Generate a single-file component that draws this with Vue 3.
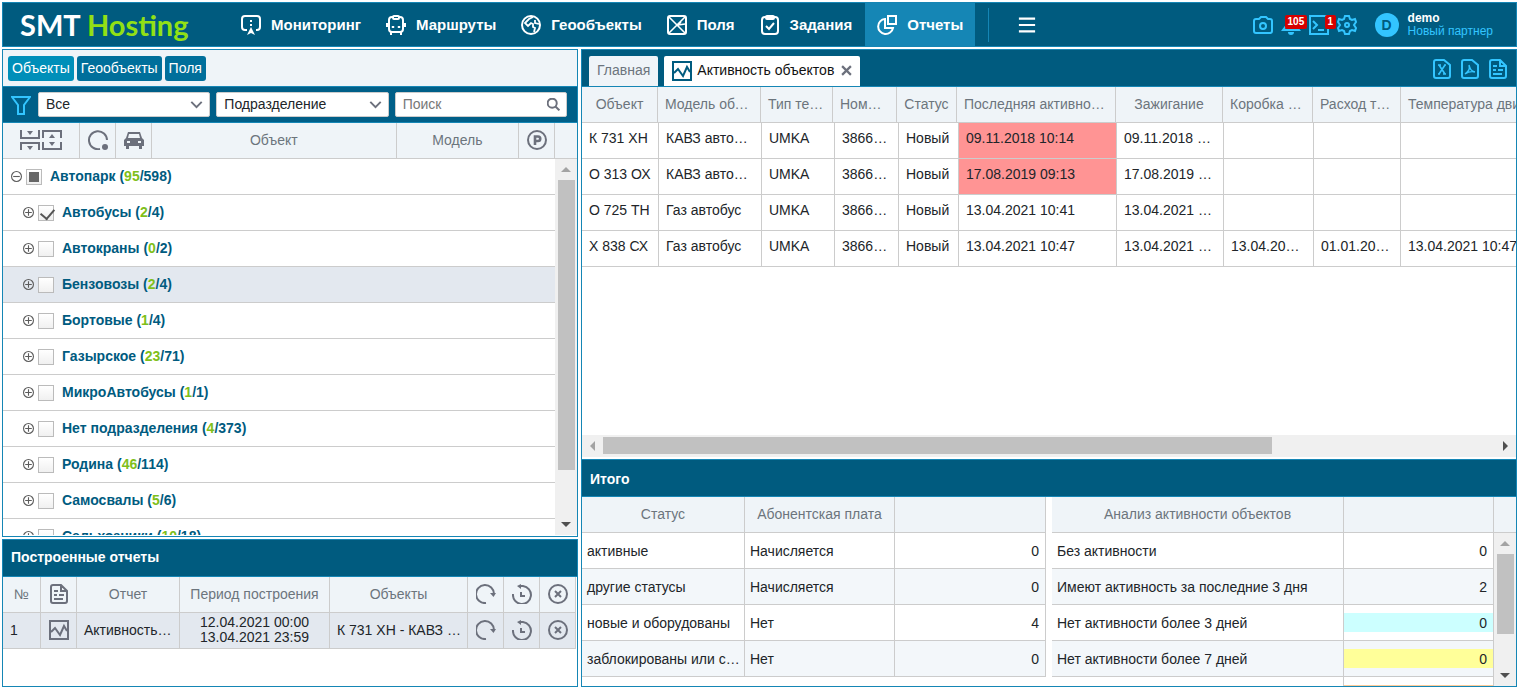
<script setup>
import { h, ref } from 'vue'

const shapes = {
  monitor: '<path d="M6 15H4a3 3 0 0 1-3-3V4a3 3 0 0 1 3-3h12a3 3 0 0 1 3 3v8a3 3 0 0 1-3 3h-1M10 5v2M10 9v2"/><path d="M10 12l4 8-4-2-4 2z" fill="currentColor" stroke="none"/>',
  bus: '<path d="M7 2H6a3 3 0 0 0-3 3v9a3 3 0 0 0 3 3h8a3 3 0 0 0 3-3V5a3 3 0 0 0-3-3h-1M1 8v4M19 8v4M5 17v3M15 17v3"/><rect x="7" y="1" width="6" height="3" rx="1"/><path d="M7 11v2M13 11v2" stroke-width="2.4"/>',
  globe: '<circle cx="10" cy="10" r="9"/><path d="M12 2L8 4 4 8l3 3 3-3 2 1v3l2 1-1 4M14 5v3l4 1" stroke-width="1.800"/>',
  field: '<rect x="1" y="1" width="18" height="18" rx="2"/><path d="M2 2l16 16M18 2L2 18M14 7l-3 3M11 10l7-1" stroke-width="1.600"/>',
  task: '<rect x="2" y="2" width="16" height="17" rx="3"/><rect x="6" y="1" width="8" height="3" rx="1"/><path d="M6 11l3 3 5-6"/>',
  report: '<path d="M8 4a7.500 7.500 0 1 0 8 9H8z"/><path d="M11 1h8v8h-8z"/>',
  menu: '<path d="M1 3h18M1 10h18M1 17h18" stroke-width="2.400"/>',
  camera: '<path d="M3 4h3l2-2h5l2 2h2a2 2 0 0 1 2 2v10a2 2 0 0 1-2 2H3a2 2 0 0 1-2-2V6a2 2 0 0 1 2-2z"/><circle cx="10" cy="11" r="3"/>',
  bell: '<path d="M2 15h16l-3-4V7a5 5 0 0 0-10 0v4z"/><path d="M7 17h6a3 3 0 0 1-6 0z" fill="currentColor" stroke="none"/>',
  terminal: '<path d="M1 1h18v18H1zM4 6l4 4-4 4M9 15h6"/>',
  gear: '<path d="M8 1h4l1 3 2 1 3-1 1 3-2 3 2 3-1 3-3-1-2 1-1 3H8l-1-3-2-1-3 1-1-3 2-3-2-3 1-3 3 1 2-1z"/><circle cx="10" cy="10" r="2"/>',
  filter: '<path d="M1 2h18l-6 8v9H7v-9z"/>',
  chevron: '<path d="M2 6l8 8 8-8"/>',
  search: '<circle cx="8" cy="8" r="7"/><path d="M13 13l6 6"/>',
  rotate: '<path d="M12 19A9 9 0 1 1 19 10"/><circle cx="17" cy="17" r="3" fill="currentColor" stroke="none"/>',
  car: '<path fill="currentColor" stroke="none" fill-rule="evenodd" d="M4 2h12l2 6 2 2v6h-2v3h-3v-3H5v3H2v-3H0v-6l2-2zM5 4L4 8h12l-1-4zM3 11v2h3v-2zM14 11v2h3v-2z"/>',
  parking: '<circle cx="10" cy="10" r="9"/><path d="M8 15V6.500h3a2 2 0 0 1 0 4.500H8" stroke-width="2.600"/>',
  doc: '<path d="M12 1H4a2 2 0 0 0-2 2v14a2 2 0 0 0 2 2h12a2 2 0 0 0 2-2V7zM12 1v6h6M5 7h4M5 11h3M10 11h5M5 15h9"/>',
  chart: '<path d="M1 1h18v18H1z"/><path d="M2 12l4-4 5 7 4-9 3 5"/>',
  redo: '<path d="M10 19A9 9 0 1 1 18 10"/><path d="M14 9h6l-2.500 4z" fill="currentColor" stroke="none"/>',
  history: '<path d="M1 10a9 9 0 1 0 10-8H8"/><path d="M9 0v5L5 2z" fill="currentColor" stroke="none"/><path d="M9 8v4h4"/>',
  cancel: '<circle cx="10" cy="10" r="9"/><path d="M7 7l6 6M13 7l-6 6"/>',
  close: '<path d="M2 2l16 16M18 2L2 18" stroke-width="4"/>',
  excel: '<path d="M12 1H4a2 2 0 0 0-2 2v14a2 2 0 0 0 2 2h12a2 2 0 0 0 2-2V6z"/><path d="M7 6l6 9M13 6l-6 9M6 6h3M12 6h2M6 15h2M11 15h3" stroke-width="1.600"/>',
  pdf: '<path d="M12 1H4a2 2 0 0 0-2 2v14a2 2 0 0 0 2 2h12a2 2 0 0 0 2-2V6z"/><path d="M9 6c1 4 2 6 6 7-4-1-7 0-10 2 4-3 5-5 4-9z" stroke-width="1.400"/>',
  minus: '<circle cx="10" cy="10" r="9"/><path d="M4 10h12"/>',
  plus: '<circle cx="10" cy="10" r="9"/><path d="M4 10h12M10 4v12"/>',
}

const Icon = (props) =>
  h('svg', {
    viewBox: '0 0 20 20',
    fill: 'none',
    stroke: 'currentColor',
    'stroke-width': 2,
    'aria-hidden': 'true',
    innerHTML: shapes[props.name],
  })
Icon.props = ['name']

const nav = [
  { icon: 'monitor', text: 'Мониторинг' },
  { icon: 'bus', text: 'Маршруты' },
  { icon: 'globe', text: 'Геообъекты' },
  { icon: 'field', text: 'Поля' },
  { icon: 'task', text: 'Задания' },
  { icon: 'report', text: 'Отчеты', active: true },
]

const groups = ref([
  { name: 'Автопарк', on: 95, all: 598, root: true, partial: true },
  { name: 'Автобусы', on: 2, all: 4, checked: true },
  { name: 'Автокраны', on: 0, all: 2 },
  { name: 'Бензовозы', on: 2, all: 4, selected: true },
  { name: 'Бортовые', on: 1, all: 4 },
  { name: 'Газырское', on: 23, all: 71 },
  { name: 'МикроАвтобусы', on: 1, all: 1 },
  { name: 'Нет подразделения', on: 4, all: 373 },
  { name: 'Родина', on: 46, all: 114 },
  { name: 'Самосвалы', on: 5, all: 6 },
  { name: 'Сельхозники', on: 10, all: 18 },
])

const heads = ['Объект', 'Модель объекта', 'Тип терминала', 'Номер терминала', 'Статус', 'Последняя активность', 'Зажигание', 'Коробка отбора', 'Расход топлива', 'Температура двигателя']
const rows = [
  ['К 731 ХН', 'КАВЗ автобус', 'UMKA', '38664512', 'Новый', '09.11.2018 10:14', '09.11.2018 10:14', '', '', ''],
  ['О 313 ОХ', 'КАВЗ автобус', 'UMKA', '38664513', 'Новый', '17.08.2019 09:13', '17.08.2019 09:13', '', '', ''],
  ['О 725 ТН', 'Газ автобус', 'UMKA', '38664514', 'Новый', '13.04.2021 10:41', '13.04.2021 10:41', '', '', ''],
  ['Х 838 СХ', 'Газ автобус', 'UMKA', '38664515', 'Новый', '13.04.2021 10:47', '13.04.2021 10:47', '13.04.2021 10:47', '01.01.2021 00:00', '13.04.2021 10:47'],
]

const totals = [
  ['активные', 'Начисляется', 0],
  ['другие статусы', 'Начисляется', 0],
  ['новые и оборудованы', 'Нет', 4],
  ['заблокированы или списаны', 'Нет', 0],
]
const analysis = [
  { text: 'Без активности', n: 0 },
  { text: 'Имеют активность за последние 3 дня', n: 2 },
  { text: 'Нет активности более 3 дней', n: 0, mark: 'cyan' },
  { text: 'Нет активности более 7 дней', n: 0, mark: 'yellow' },
  { text: 'Нет активности более 30 дней', n: 0, mark: 'orange' },
]
</script>

<template>
  <div class="app">
    <header class="top">
      <div class="logo">SMT <span>Hosting</span></div>
      <nav class="nav">
        <a v-for="n in nav" :key="n.text" href="#" :class="{ active: n.active }">
          <Icon :name="n.icon" class="ico" />{{ n.text }}
        </a>
      </nav>
      <span class="sep"></span>
      <button class="burger" aria-label="Меню"><Icon name="menu" /></button>
      <div class="tools">
        <button aria-label="Снимки"><Icon name="camera" class="ico" /></button>
        <button aria-label="Уведомления"><Icon name="bell" class="ico" /><b class="badge wide">105</b></button>
        <button aria-label="Команды"><Icon name="terminal" class="ico" /><b class="badge">1</b></button>
        <button aria-label="Настройки"><Icon name="gear" class="ico" /></button>
      </div>
      <div class="user">
        <span class="avatar">D</span>
        <div><b>demo</b><a href="#">Новый партнер</a></div>
      </div>
    </header>

    <main class="work">
      <div class="side">
        <section class="panel objects">
          <div class="modes">
            <button class="on">Объекты</button>
            <button>Геообъекты</button>
            <button>Поля</button>
          </div>
          <div class="filters">
            <button class="funnel" aria-label="Фильтр"><Icon name="filter" class="ico" /></button>
            <label class="box"><select aria-label="Показать"><option>Все</option></select><Icon name="chevron" class="mini" /></label>
            <label class="box"><select aria-label="Группировка"><option>Подразделение</option></select><Icon name="chevron" class="mini" /></label>
            <label class="box"><input type="text" placeholder="Поиск" aria-label="Поиск"><Icon name="search" class="mini" /></label>
          </div>
          <div class="heads tree-heads">
            <span>
              <svg class="fold" viewBox="0 0 42 20" fill="none" stroke="currentColor" stroke-width="2">
                <path d="M1 0v8h18V0M1 20v-7h18v7M23 8V1h18v7M23 12v7h18v-7" />
                <path d="M7 1h6l-3 4zM7 16h6l-3 4zM29 8h6l-3-4zM29 12h6l-3 4z" fill="currentColor" stroke="none" />
              </svg>
            </span>
            <span><Icon name="rotate" class="ico" /></span>
            <span><Icon name="car" class="ico" /></span>
            <span>Объект</span>
            <span>Модель</span>
            <span><Icon name="parking" class="ico" /></span>
            <span></span>
          </div>
          <div class="tree">
            <ul>
              <li v-for="g in groups" :key="g.name" :class="{ root: g.root, selected: g.selected }">
                <button class="expand" :aria-label="g.name"><Icon :name="g.root ? 'minus' : 'plus'" /></button>
                <label>
                  <input v-model="g.checked" type="checkbox" :class="{ partial: g.partial }">
                  <span>{{ g.name }} (<i>{{ g.on }}</i>/{{ g.all }})</span>
                </label>
              </li>
            </ul>
            <div class="bar vertical"><span class="arrow up"></span><span class="thumb tall"></span><span class="arrow down"></span></div>
          </div>
        </section>

        <section class="panel built">
          <h2>Построенные отчеты</h2>
          <table class="grid built-table">
            <colgroup><col class="b1"><col class="b2"><col class="b3"><col class="b4"><col><col class="b2"><col class="b2"><col class="b2"></colgroup>
            <thead>
              <tr>
                <th>№</th><th><Icon name="doc" class="ico" /></th><th>Отчет</th><th>Период построения</th><th>Объекты</th>
                <th><Icon name="redo" class="ico" /></th><th><Icon name="history" class="ico" /></th><th><Icon name="cancel" class="ico" /></th>
              </tr>
            </thead>
            <tbody>
              <tr>
                <td>1</td>
                <td class="mid"><Icon name="chart" class="ico" /></td>
                <td>Активность объектов</td>
                <td class="mid period">12.04.2021 00:00<br>13.04.2021 23:59</td>
                <td>К 731 ХН - КАВЗ автобус</td>
                <td class="mid"><button aria-label="Повторить"><Icon name="redo" class="ico" /></button></td>
                <td class="mid"><button aria-label="История"><Icon name="history" class="ico" /></button></td>
                <td class="mid"><button aria-label="Удалить"><Icon name="cancel" class="ico" /></button></td>
              </tr>
            </tbody>
          </table>
        </section>
      </div>

      <section class="panel report">
        <div class="tabs">
          <button class="tab">Главная</button>
          <div class="tab current"><Icon name="chart" class="ico" /><span>Активность объектов</span><button aria-label="Закрыть"><Icon name="close" /></button></div>
          <div class="exports">
            <button aria-label="Excel"><Icon name="excel" class="ico" /></button>
            <button aria-label="PDF"><Icon name="pdf" class="ico" /></button>
            <button aria-label="Документ"><Icon name="doc" class="ico" /></button>
          </div>
        </div>
        <div class="sheet">
          <table class="grid head-grid">
            <colgroup><col v-for="n in 10" :key="n" :class="'h' + n"></colgroup>
            <thead><tr><th v-for="t in heads" :key="t">{{ t }}</th></tr></thead>
          </table>
          <table class="grid body-grid">
            <colgroup><col v-for="n in 10" :key="n" :class="'c' + n"></colgroup>
            <tbody>
              <tr v-for="(r, ri) in rows" :key="ri">
                <td v-for="(c, ci) in r" :key="ci" :class="{ old: ci === 5 && ri < 2 }">{{ c }}</td>
              </tr>
            </tbody>
          </table>
        </div>
        <div class="bar horizontal"><span class="arrow left"></span><span class="track"><span class="thumb"></span></span><span class="arrow right"></span></div>
        <h2 class="total">Итого</h2>
        <div class="summary">
          <div class="sum-left">
            <table class="grid">
              <colgroup><col class="s1"><col class="s2"><col></colgroup>
              <thead><tr><th>Статус</th><th>Абонентская плата</th><th></th></tr></thead>
              <tbody>
                <tr v-for="t in totals" :key="t[0]"><td>{{ t[0] }}</td><td>{{ t[1] }}</td><td class="num"><span>{{ t[2] }}</span></td></tr>
              </tbody>
            </table>
          </div>
          <div class="sum-right">
            <table class="grid">
              <colgroup><col><col class="s2"></colgroup>
              <thead><tr><th>Анализ активности объектов</th><th></th></tr></thead>
              <tbody>
                <tr v-for="a in analysis" :key="a.text">
                  <td>{{ a.text }}</td><td class="num"><span :class="a.mark">{{ a.n }}</span></td>
                </tr>
              </tbody>
            </table>
          </div>
          <div class="sum-bar">
            <div class="corner"></div>
            <div class="bar vertical"><span class="arrow up"></span><span class="thumb short"></span><span class="arrow down"></span></div>
          </div>
        </div>
      </section>
    </main>
  </div>
</template>

<style>
body { margin: 0; background: #fff; }
</style>

<style scoped>
* { box-sizing: border-box; }
.app {
  height: 100vh;
  padding: 2px;
  display: flex;
  flex-direction: column;
  gap: 2px;
  overflow: hidden;
  font: 14px/16px "Liberation Sans", Arial, sans-serif;
  color: #212529;
}
button { font: inherit; color: inherit; background: none; border: 0; padding: 0; margin: 0; cursor: pointer; }
a { color: inherit; text-decoration: none; }
svg { display: block; flex: none; }
.ico { width: 20px; height: 20px; }

.top {
  height: 45px;
  flex: none;
  display: flex;
  align-items: center;
  background: #005b7f;
  border: 1px solid #1586b5;
  color: #fff;
}
.logo { width: 226px; padding-left: 17px; font: bold 29px/36px Lato, sans-serif; white-space: nowrap; }
.logo span { color: #92e015; }
.nav { display: flex; gap: 1px; align-self: stretch; }
.nav a { display: flex; align-items: center; gap: 10px; padding: 0 12px; font-size: 15px; font-weight: bold; }
.nav .active { background: #1586b5; }
.sep { width: 1px; height: 34px; margin-left: 13px; background: #1586b5; }
.burger { width: 18px; margin-left: 29px; }
.tools { display: flex; gap: 8px; margin-left: auto; color: #33c5ff; }
.tools button { position: relative; }
.badge {
  position: absolute;
  left: 16px;
  top: 0;
  padding: 0 3px;
  border-radius: 2px;
  background: #d60000;
  color: #fff;
  font-size: 10px;
  line-height: 14px;
}
.badge.wide { left: 4px; z-index: 1; }
.user { display: flex; align-items: center; gap: 9px; margin: 0 23px 0 18px; font-size: 12px; line-height: 13px; }
.user b, .user a { display: block; }
.user a { color: #33c5ff; }
.avatar { width: 24px; height: 24px; border-radius: 50%; background: #33c5ff; color: #005b7f; font-weight: bold; font-size: 14px; line-height: 24px; text-align: center; }

.work { flex: 1; min-height: 0; display: grid; grid-template-columns: 576fr 936fr; gap: 3px; }
.side { min-width: 0; min-height: 0; display: flex; flex-direction: column; gap: 2px; }
.panel { border: 1px solid #1586b5; background: #fff; display: flex; flex-direction: column; min-width: 0; min-height: 0; overflow: hidden; }
.objects { flex: 1; }
.built { height: 148px; flex: none; }
h2 { margin: 0; height: 37px; flex: none; padding-left: 8px; background: #005b7f; border-bottom: 1px solid #1586b5; color: #fff; font-size: 14px; line-height: 34px; }
.total { height: 38px; border-top: 1px solid #1586b5; line-height: 38px; }

.modes { height: 37px; flex: none; display: flex; gap: 3px; padding: 6px 5px; background: #eff4f8; border-bottom: 1px solid #1586b5; }
.modes button { height: 25px; padding: 0 4px 2px; border-radius: 3px; background: #006f9b; color: #fff; }
.modes .on { background: #008fb9; }
.filters { height: 36px; flex: none; display: flex; gap: 6px; padding: 5px 10px 5px 8px; background: #005f88; border-bottom: 1px solid #1586b5; }
.funnel { width: 21px; color: #33c5ff; }
.box { flex: 1; position: relative; display: block; height: 25px; }
.box select, .box input {
  appearance: none;
  width: 100%;
  height: 100%;
  padding: 0 7px 2px;
  border: 1px solid #ccc;
  border-radius: 2px;
  background: #fff;
  color: #212529;
  font: inherit;
}
.box input::placeholder { color: #777; opacity: 1; }
.mini { position: absolute; right: 7px; top: 6px; width: 13px; height: 13px; color: #6c707c; stroke-width: 3px; pointer-events: none; }

.heads { display: grid; height: 36px; flex: none; background: #eff4f8; border-bottom: 1px solid #ccc; color: #6c757d; }
.tree-heads { grid-template-columns: 77px 36px 36px 2fr 1fr 36px 22px; }
.heads span { display: flex; align-items: center; justify-content: center; border-right: 1px solid #ccc; padding-bottom: 2px; }
.heads span:last-child { border-right: 0; }
.heads svg { color: #6c707c; }
.fold { width: 42px; height: 20px; }
.tree { flex: 1; min-height: 0; display: flex; overflow: hidden; border-bottom: 1px solid #fff; }
ul { flex: 1; margin: 0; padding: 0; list-style: none; }
li { height: 36px; display: flex; align-items: center; padding: 0 0 0 20px; border-bottom: 1px solid #ccc; }
li.root { padding-left: 8px; }
li.selected { background: #e3e8ef; }
.expand { width: 11px; margin-right: 4px; color: #5c5c5c; }
li label { display: flex; align-items: center; gap: 8px; color: #005b7f; font-weight: bold; }
li label span { padding-bottom: 2px; }
i { font-style: normal; color: #7fbf1a; }
li input { appearance: none; width: 16px; height: 16px; margin: 1px 0 0; border: 1px solid #bbb; background: linear-gradient(#fff, #f0f0f0); }
li input:checked::before { content: ""; display: block; height: 0; }
li input:checked { display: flex; align-items: flex-start; }
li input:checked::after { content: ""; display: block; width: 7px; height: 11px; margin: 0 0 0 4px; border: solid #555; border-width: 0 2px 2px 0; transform: rotate(40deg); }
li input.partial::after { content: ""; display: block; width: 10px; height: 10px; margin: 2px; background: #666; }

.bar { background: #f0f0f0; display: flex; flex: none; }
.vertical { width: 22px; flex-direction: column; align-items: center; }
.horizontal { height: 24px; padding-bottom: 1px; border-bottom: 2px solid #fff; align-items: center; }
.arrow { width: 21px; height: 21px; flex: none; display: flex; align-items: center; justify-content: center; }
.arrow::before { content: ""; border: 5px solid transparent; }
.up::before { border-bottom-color: #a3a3a3; border-top-width: 0; }
.down::before { border-top-color: #505050; border-bottom-width: 0; }
.left::before { border-right-color: #a3a3a3; border-left-width: 0; }
.right::before { border-left-color: #505050; border-right-width: 0; }
.down { margin-top: auto; }
.thumb { background: #c1c1c1; }
.vertical .thumb { width: 17px; }
.tall { height: 77%; }
.short { height: 80px; }
.track { flex: 1; }
.track .thumb { display: block; width: 75%; height: 17px; }

.grid { width: 100%; table-layout: fixed; border-collapse: separate; border-spacing: 0; }
th, td { height: 36px; padding: 0 7px; border: solid #ccc; border-width: 0 1px 1px 0; overflow: hidden; text-overflow: ellipsis; white-space: nowrap; text-align: left; font-weight: normal; }
th { padding-bottom: 2px; background: #eff4f8; color: #6c757d; text-align: center; }
.built-table td { background: #e3e8ef; padding: 0 5px 2px 7px; }
.built-table .ico { margin: 0 auto; color: #6c707c; }
.built-table button { display: block; margin: 0 auto; }
.built-table th:has(svg), .built-table .mid:has(svg) { padding: 0 0 2px; }
.mid { text-align: center; }
.built-table .period { line-height: 15px; padding: 0 4px 2px; text-align: center; }
.built-table { width: calc(100% - 1px); }
.b1 { width: 38px; }
.b2 { width: 36px; }
.b3 { width: 103px; }
.b4 { width: 150px; }

.tabs { height: 37px; flex: none; display: flex; gap: 6px; padding: 6px 8px 0 7px; background: #005b7f; border-bottom: 1px solid #1586b5; }
.tab { height: 30px; display: flex; align-items: center; padding: 0 8px 2px; border-radius: 2px 2px 0 0; background: #eff4f8; color: #6c757d; }
.current { background: #fff; color: #111; gap: 5px; }
.current .ico { color: #005b7f; margin-top: 2px; }
.current button { width: 11px; margin-left: 2px; color: #6c707c; }
.exports { display: flex; align-items: flex-start; gap: 8px; margin-left: auto; padding-top: 3px; color: #33c5ff; }

.sheet { flex: 1; min-height: 0; overflow: hidden; }
.sheet .grid { width: 985px; }
.body-grid td { padding-bottom: 6px; }
.h1 { width: 76px; } .h2 { width: 103px; } .h3 { width: 72px; } .h4 { width: 64px; } .h5 { width: 60px; }
.h6 { width: 159px; } .h7 { width: 107px; } .h8 { width: 90px; } .h9 { width: 88px; } .h10 { width: 166px; }
.c1 { width: 77px; } .c2 { width: 103px; } .c3 { width: 73px; } .c4 { width: 64px; } .c5 { width: 60px; }
.c6 { width: 158px; } .c7 { width: 107px; } .c8 { width: 90px; } .c9 { width: 87px; } .c10 { width: 166px; }
.old { background: #ff9494; }

.summary { height: 189px; flex: none; display: flex; overflow: hidden; }
.sum-left { flex: 464; min-width: 0; padding-right: 6px; }
.sum-right { flex: 442; min-width: 0; }
.summary td { padding: 0 2px 0 5px; }
.summary tbody tr:nth-child(even) { background: #f3f7fa; }
.s1 { width: 163px; }
.s2 { width: 150px; }
.summary .num { text-align: right; padding: 0; }
.num span { display: block; padding: 2px 6px 1px 0; line-height: 16px; }
.cyan { background: #ccffff; }
.yellow { background: #ffff99; }
.orange { background: #ffcc99; }
.sum-bar { width: 22px; display: flex; flex-direction: column; }
.corner { height: 36px; background: #eff4f8; border-bottom: 1px solid #ccc; }
.sum-bar .bar { flex: 1; }
</style>
